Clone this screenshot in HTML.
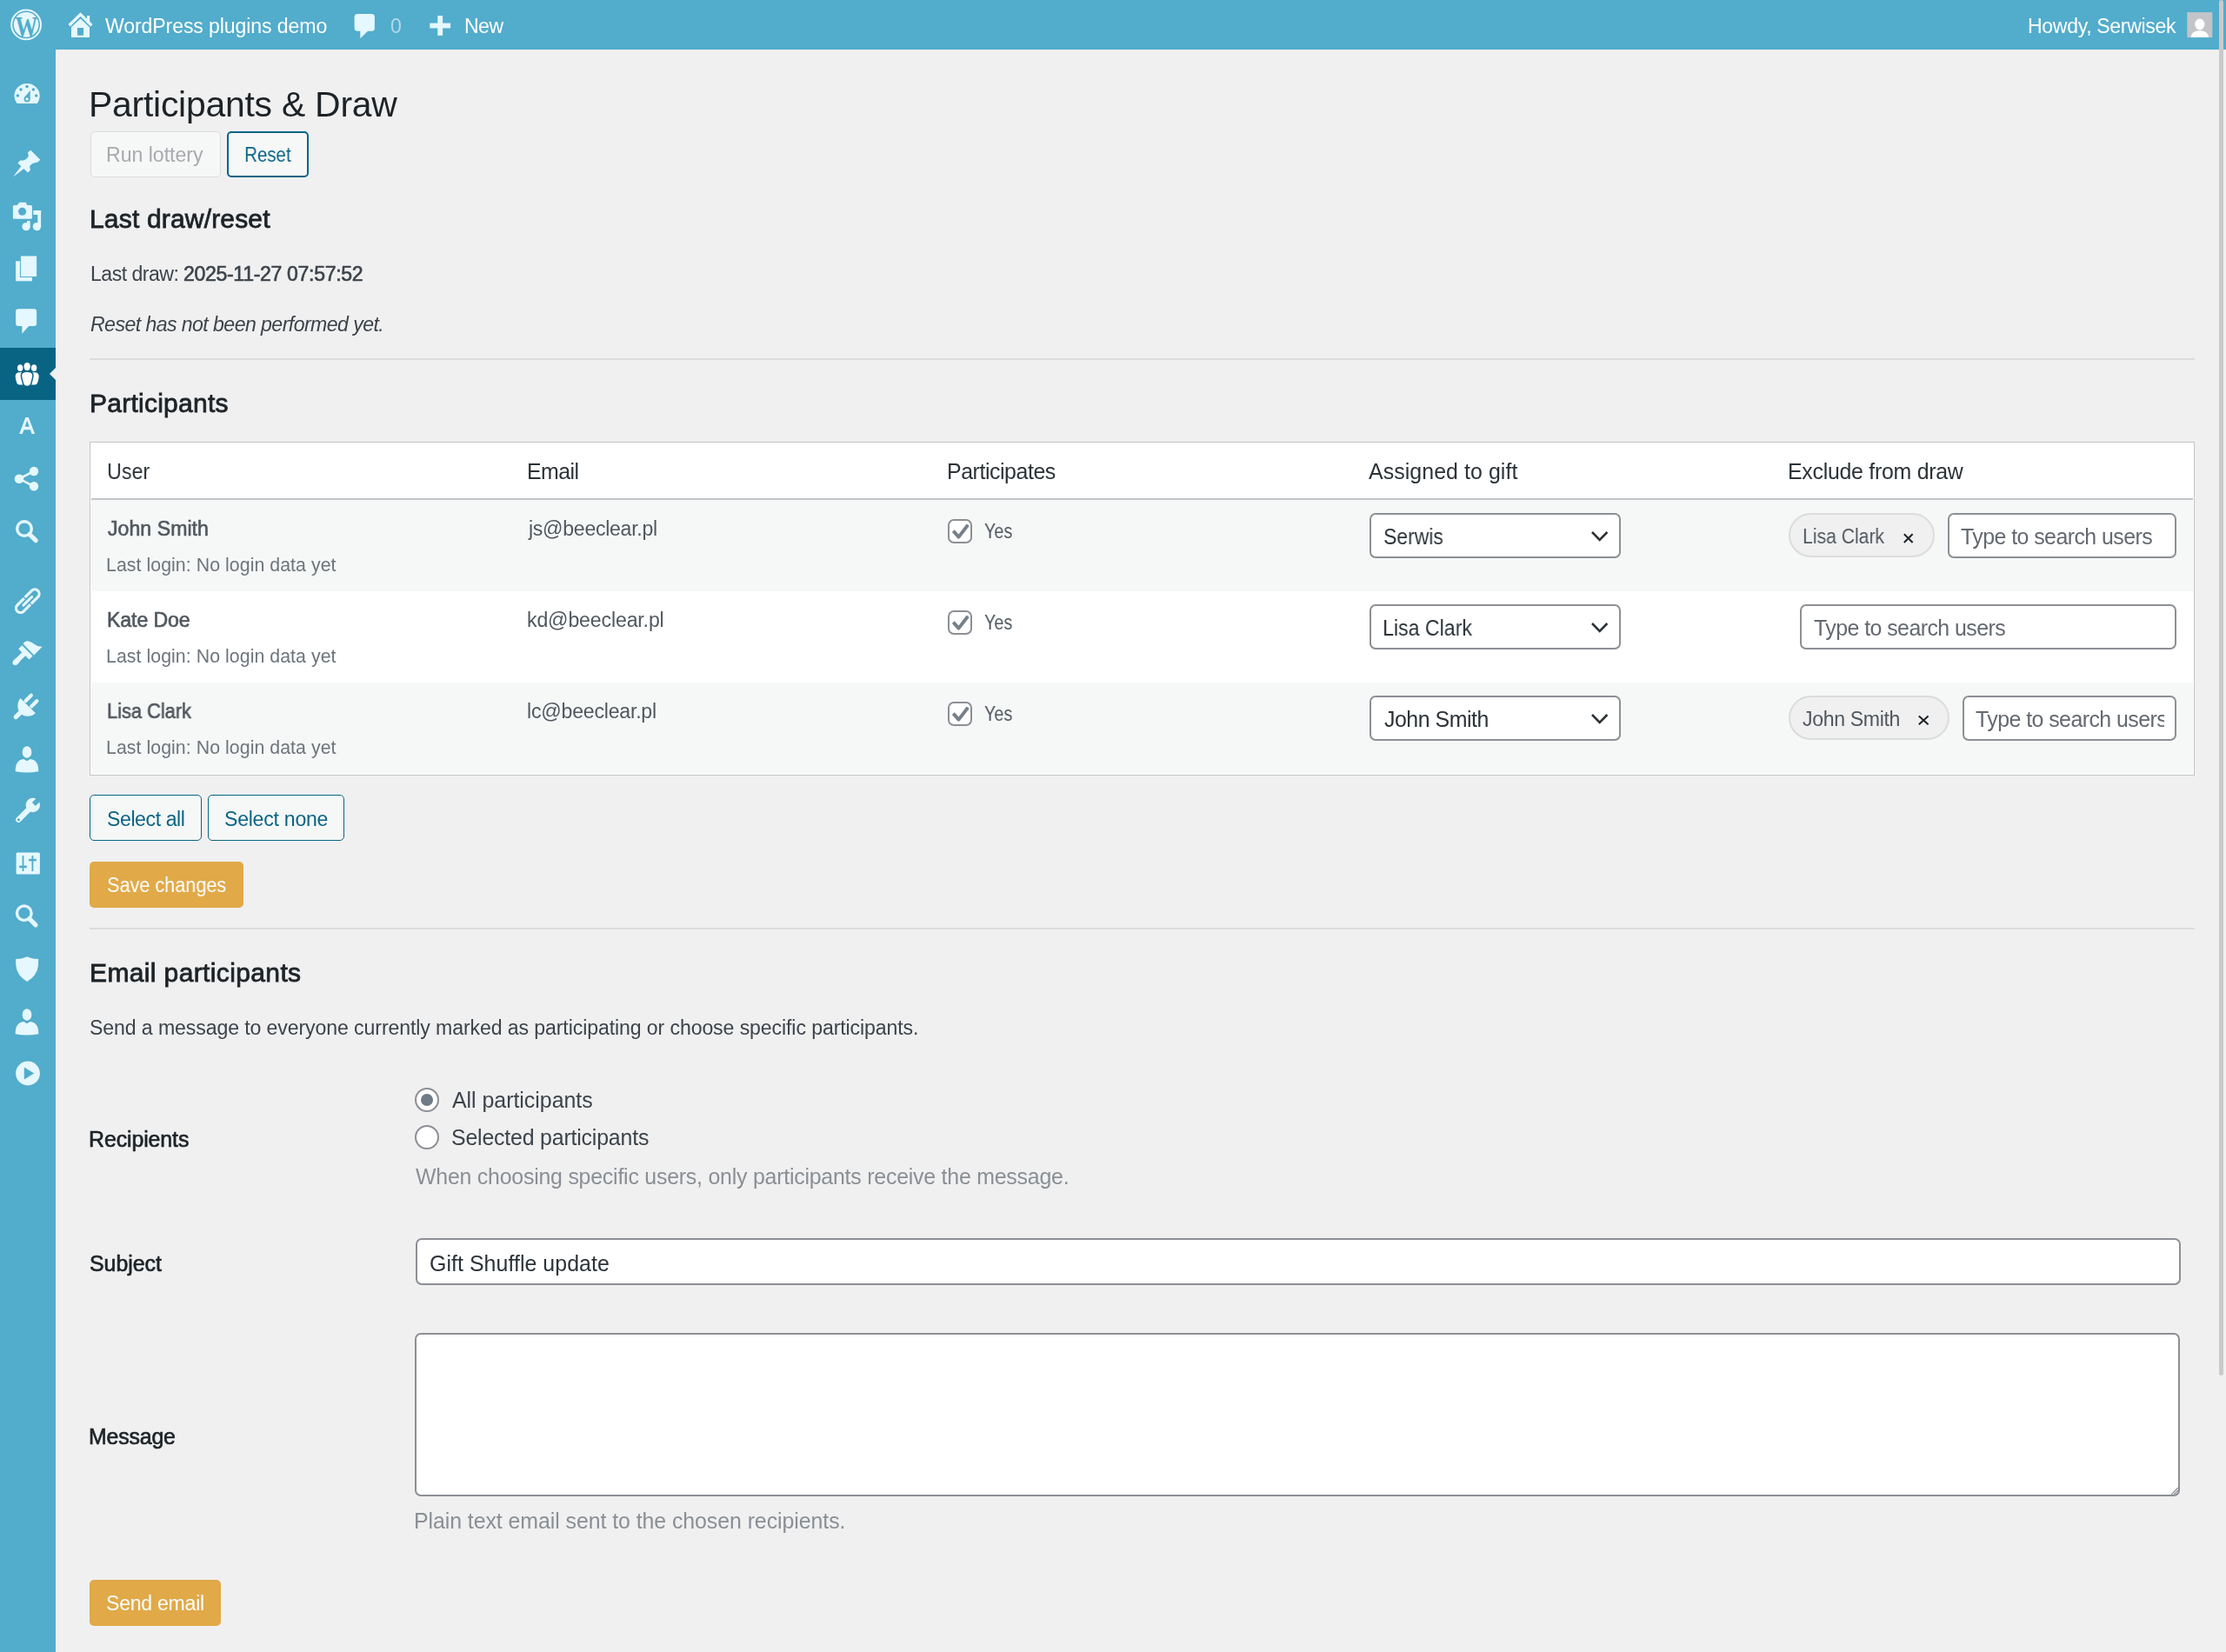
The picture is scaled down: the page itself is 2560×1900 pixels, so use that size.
<!DOCTYPE html>
<html><head><meta charset="utf-8"><title>Participants &amp; Draw</title>
<style>
html,body{margin:0;padding:0;}
body{width:2560px;height:1900px;position:relative;overflow:hidden;background:#f0f0f1;font-family:"Liberation Sans",sans-serif;}
.t{position:absolute;white-space:nowrap;will-change:transform;}
.b{position:absolute;box-sizing:border-box;}
svg{position:absolute;overflow:visible;}
</style></head><body>
<div class="b" style="left:0px;top:0px;width:2560px;height:57px;background:#52accc"></div>
<div class="b" style="left:0px;top:57px;width:64px;height:1843px;background:#52accc"></div>
<div class="b" style="left:0px;top:400px;width:64px;height:60px;background:#096484"></div>
<div class="b" style="left:56.5px;top:422.5px;width:0;height:0;border-style:solid;border-width:7.7px 7.5px 7.7px 0;border-color:transparent #f0f0f1 transparent transparent"></div>
<div class="b" style="left:103.5px;top:151px;width:150.3px;height:53px;background:#f6f7f7;border:1.8px solid #dcdcde;border-radius:5px"></div>
<div class="b" style="left:261px;top:151px;width:94px;height:53px;background:#f6f7f7;border:2px solid #096484;border-radius:5px"></div>
<div class="b" style="left:103px;top:412.2px;width:2421px;height:1.8000000000000114px;background:#dcdcde"></div>
<div class="b" style="left:103px;top:508.3px;width:2421px;height:383.49999999999994px;background:#fff;border:1.8px solid #c3c4c7"></div>
<div class="b" style="left:105px;top:573.2px;width:2417.2px;height:1.7999999999999545px;background:#c3c4c7"></div>
<div class="b" style="left:105px;top:575px;width:2417.2px;height:105px;background:#f6f7f7"></div>
<div class="b" style="left:105px;top:785px;width:2417.2px;height:105px;background:#f6f7f7"></div>
<div class="b" style="left:1090px;top:597px;width:28px;height:28px;background:#fff;border:2px solid #8c8f94;border-radius:7px"></div>
<div class="b" style="left:1575px;top:590px;width:289px;height:52px;background:#fff;border:2px solid #8c8f94;border-radius:7px"></div>
<div class="b" style="left:1090px;top:702px;width:28px;height:28px;background:#fff;border:2px solid #8c8f94;border-radius:7px"></div>
<div class="b" style="left:1575px;top:695px;width:289px;height:52px;background:#fff;border:2px solid #8c8f94;border-radius:7px"></div>
<div class="b" style="left:1090px;top:807px;width:28px;height:28px;background:#fff;border:2px solid #8c8f94;border-radius:7px"></div>
<div class="b" style="left:1575px;top:800px;width:289px;height:52px;background:#fff;border:2px solid #8c8f94;border-radius:7px"></div>
<div class="b" style="left:2057px;top:590px;width:168px;height:51px;background:#f0f0f1;border:2px solid #dcdcde;border-radius:26px"></div>
<div class="b" style="left:2057px;top:800px;width:185px;height:51px;background:#f0f0f1;border:2px solid #dcdcde;border-radius:26px"></div>
<div class="b" style="left:2240px;top:590px;width:263px;height:52px;background:#fff;border:2px solid #8c8f94;border-radius:7px"></div>
<div class="b" style="left:2070px;top:695px;width:433px;height:52px;background:#fff;border:2px solid #8c8f94;border-radius:7px"></div>
<div class="b" style="left:2257px;top:800px;width:246px;height:52px;background:#fff;border:2px solid #8c8f94;border-radius:7px"></div>
<div class="b" style="left:103.2px;top:914.3px;width:128.60000000000002px;height:53.200000000000045px;background:#f6f7f7;border:1.8px solid #096484;border-radius:5px"></div>
<div class="b" style="left:238.8px;top:914.3px;width:157.2px;height:53.200000000000045px;background:#f6f7f7;border:1.8px solid #096484;border-radius:5px"></div>
<div class="b" style="left:103.2px;top:990.8px;width:176.8px;height:53.40000000000009px;background:#e1a948;border-radius:5px"></div>
<div class="b" style="left:103px;top:1067.4px;width:2421px;height:1.7999999999999545px;background:#dcdcde"></div>
<div class="b" style="left:477px;top:1251px;width:28px;height:28px;background:#fff;border:2px solid #8c8f94;border-radius:50%"></div>
<div class="b" style="left:484px;top:1258px;width:14px;height:14px;background:#6f7b86;border-radius:50%"></div>
<div class="b" style="left:477px;top:1294px;width:28px;height:28px;background:#fff;border:2px solid #8c8f94;border-radius:50%"></div>
<div class="b" style="left:478px;top:1424px;width:2030px;height:54px;background:#fff;border:2px solid #8c8f94;border-radius:7px"></div>
<div class="b" style="left:476.5px;top:1533px;width:2030.0px;height:188px;background:#fff;border:2px solid #8c8f94;border-radius:7px"></div>
<div class="b" style="left:103px;top:1817px;width:151px;height:53px;background:#e1a948;border-radius:5px"></div>
<div class="b" style="left:2552px;top:0px;width:5px;height:1582px;background:#cacaca;border-radius:2.5px"></div>
<svg style="left:0;top:0" width="2560" height="1900" viewBox="0 0 2560 1900"><circle cx="30.1" cy="28.4" r="16.9" fill="none" stroke="#e5f8ff" stroke-width="2"/><circle cx="30.1" cy="28.4" r="14.3" fill="#e5f8ff"/><text x="0" y="0" transform="translate(30.4,42.2) scale(0.78,1)" text-anchor="middle" font-family="Liberation Serif" font-weight="700" font-size="33" fill="#52accc">W</text><polyline points="79.6,29.3 92.5,16.6 105.4,29.3" fill="none" stroke="#e5f8ff" stroke-width="3.3"/><polygon points="82,31.3 92.5,21.6 103,31.3 103,43.1 82,43.1" fill="#e5f8ff"/><rect x="89" y="32" width="7" height="8.7" fill="#52accc"/><rect x="100" y="18" width="3.2" height="9" fill="#e5f8ff"/><rect x="407.6" y="16" width="23.3" height="19.8" rx="3.5" fill="#e5f8ff"/><polygon points="414.3,35 414.3,44.2 423.8,35" fill="#e5f8ff"/><rect x="494.3" y="26.6" width="23.8" height="5.8" fill="#e5f8ff"/><rect x="503.3" y="18" width="5.8" height="22.9" fill="#e5f8ff"/><rect x="2515.3" y="14.1" width="29" height="29" fill="#c3c4c7"/><ellipse cx="2529.8" cy="28" rx="5.6" ry="6.4" fill="#fff"/><path d="M2519.6,43.1 Q2520,35.6 2529.8,35.3 Q2539.6,35.6 2540,43.1 Z" fill="#fff"/><path d="M16.4,110.6 A14.65,14.65 0 0 1 45.7,110.6 Q45.5,115.6 42.9,118.9 L19.6,118.9 Q16.7,115.6 16.4,110.6 Z" fill="#e5f8ff"/><circle cx="31.0" cy="99.6" r="1.75" fill="#52accc"/><circle cx="24.0" cy="102.9" r="1.75" fill="#52accc"/><circle cx="38.3" cy="102.9" r="1.75" fill="#52accc"/><circle cx="20.4" cy="110.0" r="1.75" fill="#52accc"/><circle cx="41.7" cy="110.0" r="1.75" fill="#52accc"/><polygon points="27.9,112.2 34.8,103.9 34.6,114.6" fill="#52accc"/><circle cx="31.1" cy="113.9" r="3.5" fill="#52accc"/><circle cx="31.1" cy="113.9" r="1.7" fill="#e5f8ff"/><path d="M35.3,172.8 L46.3,183.7 L43.4,186.6 L41.2,186.9 Q36.8,187.4 34.9,190.2 Q33.9,191.6 34.2,192.6 L35,195.4 L32,198.5 L27.4,194.1 Q20,200 15.1,203.4 Q18.5,198.5 24.4,191.3 L20.4,187.4 L23.6,184.2 L25.5,184.7 Q28.6,184.2 30.6,182.5 Q32.9,180.2 32.8,178.7 L32,175.3 Z" fill="#e5f8ff"/><rect x="14.9" y="236" width="22" height="15.8" rx="1.5" fill="#e5f8ff"/><polygon points="19.4,236.5 22.3,232.7 29.7,232.7 31.5,236.5" fill="#e5f8ff"/><circle cx="25.6" cy="243.3" r="4.5" fill="#52accc"/><circle cx="30.1" cy="260.6" r="4.7" fill="#e5f8ff"/><circle cx="42.4" cy="260.6" r="4.7" fill="#e5f8ff"/><rect x="31" y="254" width="3.6" height="7" fill="#e5f8ff"/><rect x="43.3" y="242" width="3.8" height="18.8" fill="#e5f8ff"/><rect x="38.3" y="242" width="8.8" height="5" fill="#e5f8ff"/><rect x="18.1" y="300.3" width="18.9" height="23" fill="#e5f8ff"/><rect x="22.9" y="293.5" width="20.2" height="25.5" fill="#52accc"/><rect x="23.9" y="294.5" width="18.2" height="23.5" fill="#e5f8ff"/><rect x="18.1" y="355.2" width="24" height="19.8" rx="3" fill="#e5f8ff"/><polygon points="25.4,374 25.4,383.8 34,374" fill="#e5f8ff"/><ellipse cx="31.2" cy="421.6" rx="3.7" ry="4.7" fill="#fff"/><ellipse cx="23.2" cy="423.1" rx="3.2" ry="3.95" fill="#fff"/><ellipse cx="39.1" cy="423.1" rx="3.2" ry="3.95" fill="#fff"/><path d="M27,428.3 L22.5,428.3 Q17.7,428.5 17.7,433 Q17.9,436.5 19.4,440.6 Q20.2,442.5 22.3,442.5 L27,442.5 Z" fill="#fff"/><path d="M35.4,428.3 L39.9,428.3 Q44.7,428.5 44.7,433 Q44.5,436.5 43,440.6 Q42.2,442.5 40.1,442.5 L35.4,442.5 Z" fill="#fff"/><path d="M24.4,431.8 Q24.4,427.2 31.2,427.2 Q38,427.2 38,431.8 Q37.8,434.5 35.9,441 Q35,444.6 31.2,444.6 Q27.4,444.6 26.5,441 Q24.6,434.5 24.4,431.8 Z" fill="#fff" stroke="#096484" stroke-width="1.5"/><path fill-rule="evenodd" d="M22.2,499.1 L29.4,479.9 L32.8,479.9 L40.1,499.1 L36.5,499.1 L34.9,494.2 L27.5,494.2 L25.8,499.1 Z M28.7,490.8 L33.8,490.8 L31.1,483.6 Z" fill="#e5f8ff"/><g stroke="#e5f8ff" stroke-width="2.6"><line x1="22" y1="550.7" x2="39" y2="542"/><line x1="22" y1="550.7" x2="39" y2="559.3"/></g><circle cx="22" cy="550.7" r="5.3" fill="#e5f8ff"/><circle cx="39" cy="542" r="5.2" fill="#e5f8ff"/><circle cx="39" cy="559.3" r="5.2" fill="#e5f8ff"/><circle cx="28" cy="608" r="8.3" fill="none" stroke="#e5f8ff" stroke-width="3.4"/><line x1="34" y1="614.5" x2="41.2" y2="621.6" stroke="#e5f8ff" stroke-width="5.2" stroke-linecap="round"/><g transform="translate(31.8,691.2) rotate(-45)" fill="none" stroke="#e5f8ff"><path stroke-width="3.2" d="M0.6,-5.1 L11.6,-5.1 A5.1,5.1 0 0 1 11.6,5.1 L0.6,5.1"/><path stroke-width="3.2" d="M-0.6,5.1 L-11.6,5.1 A5.1,5.1 0 0 1 -11.6,-5.1 L-0.6,-5.1"/><path stroke-width="2.9" stroke-linecap="round" d="M-7,0 L7,0"/></g><path d="M26.6,740.6 Q29,736.6 33,737.4 Q37,738.4 40,741.2 Q43.5,743.8 48.7,743.8 L39.1,753.6 Z" fill="#e5f8ff"/><polygon points="25.3,742.2 37.6,754.5 33.5,758.6 21.2,746.3" fill="#e5f8ff"/><line x1="28.5" y1="751" x2="19.5" y2="760" stroke="#e5f8ff" stroke-width="5.6" stroke-linecap="round"/><ellipse cx="18.6" cy="761" rx="4.6" ry="3.3" transform="rotate(-45 18.6 761)" fill="#e5f8ff"/><path d="M23.5,803 L40.8,820.3 Q37,824 31,823.8 Q26.5,823.5 23.5,820.5 Q20.5,817.5 20.3,813 Q20.2,807 23.5,803 Z" fill="#e5f8ff"/><line x1="23" y1="820" x2="18.2" y2="824.6" stroke="#e5f8ff" stroke-width="5.2" stroke-linecap="round"/><line x1="29.6" y1="806" x2="35.8" y2="799.8" stroke="#e5f8ff" stroke-width="4.2" stroke-linecap="round"/><line x1="36.2" y1="812.4" x2="42.4" y2="806.2" stroke="#e5f8ff" stroke-width="4.2" stroke-linecap="round"/><ellipse cx="31" cy="865.0" rx="5.4" ry="6.8" fill="#e5f8ff"/><path d="M17.7,887.2 Q17.4,874.2 27.2,873.0 L31,875.2 L34.8,873.0 Q44.6,874.2 44.3,887.2 Q31,889.6 17.7,887.2 Z" fill="#e5f8ff"/><line x1="21.3" y1="942.8" x2="34.5" y2="929.6" stroke="#e5f8ff" stroke-width="6.4" stroke-linecap="round"/><circle cx="37.8" cy="926" r="8.2" fill="#e5f8ff"/><polygon points="44.3,915.5 48.3,919.5 40.84,926.92 36.88,922.96" fill="#52accc"/><circle cx="21.4" cy="942.8" r="1.5" fill="#52accc"/><rect x="18.6" y="980.5" width="27.3" height="25.1" rx="1.5" fill="#e5f8ff"/><rect x="25.6" y="984" width="1.8" height="18" fill="#52accc"/><rect x="22.2" y="995.6" width="8.6" height="2.6" fill="#52accc"/><rect x="36.5" y="984" width="1.8" height="18" fill="#52accc"/><rect x="33.2" y="987.8" width="8.6" height="2.6" fill="#52accc"/><circle cx="27.8" cy="1050.2" r="8.3" fill="none" stroke="#e5f8ff" stroke-width="3.4"/><line x1="33.8" y1="1056.7" x2="41.0" y2="1063.8" stroke="#e5f8ff" stroke-width="5.2" stroke-linecap="round"/><path d="M18.1,1103 Q26,1102.6 31.1,1100.2 Q36.2,1102.6 44.2,1103 L44,1110 Q43,1122 31.1,1129 Q19.2,1122 18.3,1110 Z" fill="#e5f8ff"/><ellipse cx="31" cy="1167.0" rx="5.4" ry="6.8" fill="#e5f8ff"/><path d="M17.7,1189.3 Q17.4,1176.3 27.2,1175.1 L31,1177.3 L34.8,1175.1 Q44.6,1176.3 44.3,1189.3 Q31,1191.7 17.7,1189.3 Z" fill="#e5f8ff"/><circle cx="32" cy="1234.5" r="13.9" fill="#e5f8ff"/><polygon points="27.8,1227.5 39.2,1234.5 27.8,1241.5" fill="#52accc"/><polyline points="1096.3,610.6 1102.5,617.6 1113.2,603.8" fill="none" stroke="#75808a" stroke-width="3.9" stroke-linejoin="round"/><polyline points="1831,612 1839.7,621 1848.4,612" fill="none" stroke="#2c3338" stroke-width="2.6"/><polyline points="1096.3,715.6 1102.5,722.6 1113.2,708.8" fill="none" stroke="#75808a" stroke-width="3.9" stroke-linejoin="round"/><polyline points="1831,717 1839.7,726 1848.4,717" fill="none" stroke="#2c3338" stroke-width="2.6"/><polyline points="1096.3,820.6 1102.5,827.6 1113.2,813.8" fill="none" stroke="#75808a" stroke-width="3.9" stroke-linejoin="round"/><polyline points="1831,822 1839.7,831 1848.4,822" fill="none" stroke="#2c3338" stroke-width="2.6"/><path d="M2189.8,614.3 L2199.6,624 M2199.6,614.3 L2189.8,624" stroke="#1d2327" stroke-width="2.0"/><path d="M2206.8,823.5 L2217.6,833.3 M2217.6,823.5 L2206.8,833.3" stroke="#1d2327" stroke-width="2.0"/><path d="M2497,1719 L2505,1711 M2500,1719 L2505,1714 M2503,1719 L2505,1717" stroke="#8c8f94" stroke-width="1.2"/></svg>
<div class="t" style="left:120.80px;top:19.45px;font-size:23.1px;line-height:23.1px;color:#fff;letter-spacing:-0.111px;">WordPress plugins demo</div>
<div class="t" style="left:448.90px;top:19.15px;font-size:23.1px;line-height:23.1px;color:rgba(240,246,252,.6);">0</div>
<div class="t" style="left:534.20px;top:19.15px;font-size:23.1px;line-height:23.1px;color:#fff;letter-spacing:-0.561px;">New</div>
<div class="t" style="left:2332.00px;top:19.45px;font-size:23.1px;line-height:23.1px;color:#fff;letter-spacing:-0.346px;">Howdy, Serwisek</div>
<div class="t" style="left:102.40px;top:100.08px;font-size:40.9px;line-height:40.9px;color:#1d2327;letter-spacing:-0.235px;">Participants &amp; Draw</div>
<div class="t" style="left:122.40px;top:167.05px;font-size:23.1px;line-height:23.1px;color:#a7aaad;letter-spacing:-0.012px;">Run lottery</div>
<div class="t" style="left:280.90px;top:167.15px;font-size:23.1px;line-height:23.1px;color:#096484;transform:scaleX(0.8863);transform-origin:1.00px 0;">Reset</div>
<div class="t" style="left:102.90px;top:236.71px;font-size:30px;line-height:30px;-webkit-text-stroke:0.81px #1d2327;color:#1d2327;letter-spacing:0.174px;">Last draw/reset</div>
<div class="t" style="left:103.50px;top:303.95px;font-size:23.1px;line-height:23.1px;color:#3c434a;letter-spacing:-0.514px;">Last draw:</div>
<div class="t" style="left:211.00px;top:303.95px;font-size:23.1px;line-height:23.1px;-webkit-text-stroke:0.62px #3c434a;color:#3c434a;letter-spacing:-0.339px;">2025-11-27 07:57:52</div>
<div class="t" style="left:104.00px;top:361.75px;font-size:23.1px;line-height:23.1px;font-style:italic;color:#3c434a;letter-spacing:-0.559px;">Reset has not been performed yet.</div>
<div class="t" style="left:102.70px;top:449.11px;font-size:30px;line-height:30px;-webkit-text-stroke:0.81px #1d2327;color:#1d2327;letter-spacing:0.250px;">Participants</div>
<div class="t" style="left:122.70px;top:530.42px;font-size:24.9px;line-height:24.9px;color:#2c3338;transform:scaleX(0.9344);transform-origin:1.00px 0;">User</div>
<div class="t" style="left:605.50px;top:530.42px;font-size:24.9px;line-height:24.9px;color:#2c3338;letter-spacing:-0.552px;">Email</div>
<div class="t" style="left:1089.20px;top:530.42px;font-size:24.9px;line-height:24.9px;color:#2c3338;letter-spacing:-0.436px;">Participates</div>
<div class="t" style="left:1574.40px;top:530.42px;font-size:24.9px;line-height:24.9px;color:#2c3338;letter-spacing:0.075px;">Assigned to gift</div>
<div class="t" style="left:2056.20px;top:530.42px;font-size:24.9px;line-height:24.9px;color:#2c3338;letter-spacing:-0.271px;">Exclude from draw</div>
<div class="t" style="left:123.50px;top:596.85px;font-size:23.1px;line-height:23.1px;-webkit-text-stroke:0.62px #50575e;color:#50575e;letter-spacing:0.044px;">John Smith</div>
<div class="t" style="left:122.00px;top:639.57px;font-size:21.3px;line-height:21.3px;color:#6e757c;letter-spacing:0.060px;">Last login: No login data yet</div>
<div class="t" style="left:608.00px;top:596.85px;font-size:23.1px;line-height:23.1px;color:#50575e;letter-spacing:-0.284px;">js@beeclear.pl</div>
<div class="t" style="left:1132.00px;top:599.75px;font-size:23.1px;line-height:23.1px;color:#50575e;transform:scaleX(0.8538);transform-origin:0.00px 0;">Yes</div>
<div class="t" style="left:1591.00px;top:604.92px;font-size:24.9px;line-height:24.9px;color:#2c3338;transform:scaleX(0.9203);transform-origin:1.00px 0;">Serwis</div>
<div class="t" style="left:122.50px;top:701.85px;font-size:23.1px;line-height:23.1px;-webkit-text-stroke:0.62px #50575e;color:#50575e;letter-spacing:-0.095px;">Kate Doe</div>
<div class="t" style="left:122.00px;top:744.57px;font-size:21.3px;line-height:21.3px;color:#6e757c;letter-spacing:0.060px;">Last login: No login data yet</div>
<div class="t" style="left:606.00px;top:701.85px;font-size:23.1px;line-height:23.1px;color:#50575e;letter-spacing:-0.139px;">kd@beeclear.pl</div>
<div class="t" style="left:1132.00px;top:704.75px;font-size:23.1px;line-height:23.1px;color:#50575e;transform:scaleX(0.8538);transform-origin:0.00px 0;">Yes</div>
<div class="t" style="left:1590.00px;top:709.92px;font-size:24.9px;line-height:24.9px;color:#2c3338;transform:scaleX(0.9285);transform-origin:2.00px 0;">Lisa Clark</div>
<div class="t" style="left:122.50px;top:806.85px;font-size:23.1px;line-height:23.1px;-webkit-text-stroke:0.62px #50575e;color:#50575e;transform:scaleX(0.9441);transform-origin:1.00px 0;">Lisa Clark</div>
<div class="t" style="left:122.00px;top:849.57px;font-size:21.3px;line-height:21.3px;color:#6e757c;letter-spacing:0.060px;">Last login: No login data yet</div>
<div class="t" style="left:606.00px;top:806.85px;font-size:23.1px;line-height:23.1px;color:#50575e;letter-spacing:-0.207px;">lc@beeclear.pl</div>
<div class="t" style="left:1132.00px;top:809.75px;font-size:23.1px;line-height:23.1px;color:#50575e;transform:scaleX(0.8538);transform-origin:0.00px 0;">Yes</div>
<div class="t" style="left:1592.00px;top:814.92px;font-size:24.9px;line-height:24.9px;color:#2c3338;letter-spacing:-0.475px;">John Smith</div>
<div class="t" style="left:2073.40px;top:606.25px;font-size:23.1px;line-height:23.1px;color:#50575e;transform:scaleX(0.9156);transform-origin:1.00px 0;">Lisa Clark</div>
<div class="t" style="left:2073.20px;top:816.35px;font-size:23.1px;line-height:23.1px;color:#50575e;letter-spacing:-0.342px;">John Smith</div>
<div class="t" style="left:2255.40px;top:604.92px;font-size:24.9px;line-height:24.9px;color:#646970;letter-spacing:-0.542px;">Type to search users</div>
<div class="t" style="left:2086.00px;top:709.92px;font-size:24.9px;line-height:24.9px;color:#646970;letter-spacing:-0.542px;">Type to search users</div>
<div class="t" style="left:2272.40px;top:814.92px;font-size:24.9px;line-height:24.9px;color:#646970;letter-spacing:-0.542px;clip-path:polygon(-20px -50px,216.1px -50px,216.1px 100px,-20px 100px);">Type to search users</div>
<div class="t" style="left:122.70px;top:930.65px;font-size:23.1px;line-height:23.1px;color:#096484;letter-spacing:-0.419px;">Select all</div>
<div class="t" style="left:257.50px;top:930.65px;font-size:23.1px;line-height:23.1px;color:#096484;letter-spacing:-0.253px;">Select none</div>
<div class="t" style="left:122.70px;top:1007.05px;font-size:23.1px;line-height:23.1px;color:#fff;transform:scaleX(0.9370);transform-origin:1.00px 0;">Save changes</div>
<div class="t" style="left:102.50px;top:1104.01px;font-size:30px;line-height:30px;-webkit-text-stroke:0.81px #1d2327;color:#1d2327;letter-spacing:0.372px;">Email participants</div>
<div class="t" style="left:102.80px;top:1170.75px;font-size:23.1px;line-height:23.1px;color:#3c434a;letter-spacing:-0.101px;">Send a message to everyone currently marked as participating or choose specific participants.</div>
<div class="t" style="left:101.80px;top:1297.52px;font-size:24.9px;line-height:24.9px;-webkit-text-stroke:0.67px #1d2327;color:#1d2327;letter-spacing:-0.093px;">Recipients</div>
<div class="t" style="left:519.80px;top:1253.12px;font-size:24.9px;line-height:24.9px;color:#3c434a;letter-spacing:-0.014px;">All participants</div>
<div class="t" style="left:518.80px;top:1295.72px;font-size:24.9px;line-height:24.9px;color:#3c434a;letter-spacing:-0.186px;">Selected participants</div>
<div class="t" style="left:477.60px;top:1341.12px;font-size:24.9px;line-height:24.9px;color:#8a8f94;letter-spacing:-0.222px;">When choosing specific users, only participants receive the message.</div>
<div class="t" style="left:102.60px;top:1441.02px;font-size:24.9px;line-height:24.9px;-webkit-text-stroke:0.67px #1d2327;color:#1d2327;letter-spacing:-0.029px;">Subject</div>
<div class="t" style="left:493.80px;top:1440.92px;font-size:24.9px;line-height:24.9px;color:#2c3338;letter-spacing:0.057px;">Gift Shuffle update</div>
<div class="t" style="left:101.60px;top:1639.62px;font-size:24.9px;line-height:24.9px;-webkit-text-stroke:0.67px #1d2327;color:#1d2327;letter-spacing:-0.187px;">Message</div>
<div class="t" style="left:475.90px;top:1737.42px;font-size:24.9px;line-height:24.9px;color:#8a8f94;letter-spacing:-0.066px;">Plain text email sent to the chosen recipients.</div>
<div class="t" style="left:122.30px;top:1832.75px;font-size:23.1px;line-height:23.1px;color:#fff;letter-spacing:-0.267px;">Send email</div>
</body></html>
